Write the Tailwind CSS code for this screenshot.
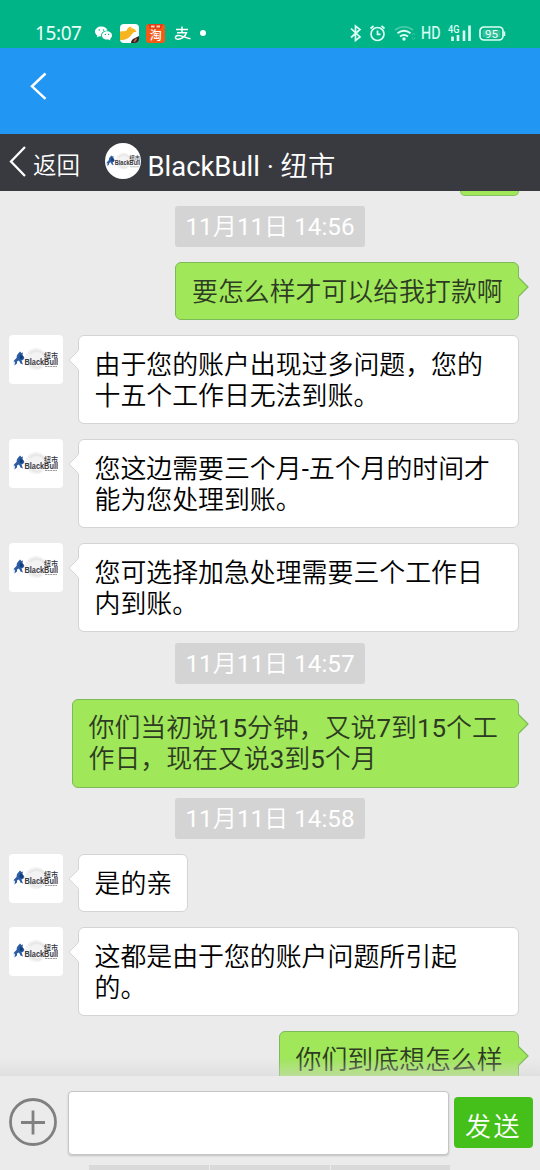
<!DOCTYPE html>
<html lang="zh-CN">
<head>
<meta charset="utf-8">
<title>BlackBull · 纽市</title>
<script src="https://cdn.jsdelivr.net/npm/@tailwindcss/browser@4"></script>
</head>
<body class="bg-[#ebebeb]">
<svg class="hidden">
  <symbol id="logo" viewBox="0 0 54 49">
    <circle cx="27" cy="24" r="11" fill="#f3f3f3"/>
    <path d="M20 19q6-5 12-2t5 9M20 28q5 6 12 4" fill="none" stroke="#e8e8e8" stroke-width="2"/>
    <path d="M4 29.500l1-4 2.500-2.500.500-3 3-3.500 1.500 1.500 1.500-.500-.500 2.500 2 3-1.500 2-1.500.500 1.500 4-2.500-1-1.500-3-2 1 0 2-2.500 2 .500-4-1.500.500z" fill="#2d5da3"/>
    <path d="M11 19l3.500 2.500-1.500 3-2.500-1z" fill="#173e7b"/>
    <text x="15.500" y="29.600" font-family="Liberation Sans, sans-serif" font-size="8.800" font-weight="700" fill="#38383e" textLength="33.500" lengthAdjust="spacingAndGlyphs">BlackBull</text>
    <text x="35" y="22.800" font-family="Noto Sans CJK SC, sans-serif" font-size="7" font-weight="500" fill="#34343a">纽市</text>
    <path d="M36 31.500h12" stroke="#999" stroke-width="1" stroke-dasharray="2 .6"/>
  </symbol>
  <symbol id="tailL" viewBox="0 0 11 20"><path d="M11 0L1 10l10 10z" fill="#fff"/><path d="M10.500.500L1 10l9.500 9.500" fill="none" stroke="#d6d6d6"/></symbol>
  <symbol id="tailR" viewBox="0 0 11 20"><path d="M0 0l10 10L0 20z" fill="#a0e75a"/><path d="M.500.500L10 10 .500 19.500" fill="none" stroke="#7cba58" stroke-width="1.2"/></symbol>
</svg>
<div class="w-[540px] h-[1170px] overflow-hidden flex flex-col bg-[#ebebeb] font-[Roboto,'Noto_Sans_CJK_SC',sans-serif]">
  <div class="h-12 shrink-0 bg-[#00b487] flex items-start justify-between pt-[21px] pl-[35px] pr-[34px] text-[#e9fff8]">
    <div class="flex items-center h-6">
      <span class="w-[60px] text-[19px] leading-6 tracking-[-0.4px] font-['Noto_Sans',sans-serif]">15:07</span>
      <svg class="w-[17px] h-[15px]" viewBox="0 0 17 15"><path d="M6.500.500C3 .500 0 2.600 0 5.600c0 1.700.900 3 2.300 3.900L1.800 11.500l2.300-1.200 2.200.300C5.500 7 8 4.500 12.500 4.400 11.700 2 9.300.500 6.500.500z" fill="#fff"/><path d="M12 5.200c-2.900 0-5 1.900-5 4.200s2.100 4.200 5 4.200l1.500-.200 2 1-.400-1.700c1.200-.800 1.900-2 1.900-3.300 0-2.300-2.200-4.200-5-4.200z" fill="#fff"/><g fill="#00b487"><circle cx="4.300" cy="4" r=".8"/><circle cx="8.600" cy="4" r=".8"/><circle cx="10.400" cy="8.400" r=".7"/><circle cx="13.600" cy="8.400" r=".7"/></g></svg>
      <svg class="ml-2 w-[19px] h-[19px]" viewBox="0 0 19 19"><rect width="19" height="19" rx="4" fill="#fff"/><path d="M0 7.500l6-.500 2-3 2-1.500 2 1.500 3 1.500 1.500 2.500-2.500 0-2 2q-3 5-9 6L0 16z" fill="#f6b51e"/><path d="M10 3l1 2 3 1z" fill="#ffd04b"/><path d="M11 19q0-3 3-4.500l5-2.500v3q0 4-4 4z" fill="#2b2523"/><path d="M14 18l2.500-3.500" stroke="#d55d3e" stroke-width="1.500"/></svg>
      <svg class="ml-[7px] w-[19px] h-[19px]" viewBox="0 0 19 19"><rect width="19" height="19" rx="3" fill="#f35b17"/><path d="M2 0h15l-2 5H4z" fill="#e83d1c"/><path d="M5 2.500h3.500M10.500 2.500h3.500" stroke="#ffd9a8" stroke-width="2"/><text x="3.800" y="15.500" font-size="12" font-weight="500" fill="#fff" font-family="Noto Sans CJK SC, sans-serif">淘</text></svg>
      <svg class="ml-[9px] w-[17px] h-[15px]" viewBox="0 0 17 15"><path d="M2 3.500h12M8 .500v6M3 6.700h9.500C11 11 7 13.500 3.500 13.200c-2.600-.200-3-3.200.300-3.700C8 9 11 12 16.500 12.800" fill="none" stroke="#fff" stroke-width="1.500"/></svg>
      <span class="ml-[9px] w-[6px] h-[6px] rounded-full bg-white"></span>
    </div>
    <svg class="w-[157px] h-6" viewBox="0 0 157 24" fill="none" stroke="#dcfff4" stroke-width="1.700">
      <path d="M2 7.500l9 8.500-4.500 3.500V5l4.500 3.500L2 16.500"/>
      <circle cx="28.500" cy="13" r="6.500"/><path d="M28.500 9.500V13.300h3M21.500 7.500l3-2.500M35.500 7.500l-3-2.500"/>
      <path d="M46 9q9-6.500 18 0" stroke="#4cccaa"/><path d="M48.500 12.200q6.500-5 13 0M51 15.500q4-3 8 0" stroke-width="2"/><circle cx="55" cy="18" r="1.700" fill="#dcfff4" stroke="none"/><path d="M63 14l1.500-2 1.500 2M63 16.500l1.500 2 1.500-2" stroke="#3cc3a0" stroke-width="1"/>
      <text x="72" y="18" font-size="17.500" fill="#dcfff4" stroke="#dcfff4" stroke-width=".2" font-family="Roboto, sans-serif" textLength="19.500" lengthAdjust="spacingAndGlyphs">HD</text>
      <text x="99" y="11.500" font-size="10" font-weight="500" fill="#dcfff4" stroke="none" font-family="Roboto, sans-serif" textLength="11.500" lengthAdjust="spacingAndGlyphs">4G</text>
      <path d="M103.500 15.500v4.500M109 14v6M115 9.500v10.500M120.500 4.500v15.500" stroke-width="2.600"/>
      <rect x="131" y="6" width="23" height="13" rx="4"/><path d="M155.500 10.500v4.500" stroke-width="1.500"/><rect x="133.500" y="8.500" width="18" height="8" rx="2" fill="#35bf9b" stroke="none"/>
      <text x="136" y="16.500" font-size="11.500" fill="#eafff9" stroke="none" font-family="Roboto, sans-serif">95</text>
    </svg>
  </div>
  <div class="h-[86px] shrink-0 bg-[#2196f3] pt-6 pl-[30px]">
    <svg class="w-[17px] h-[28px]" viewBox="0 0 17 28"><path d="M15.500 1.500L2 14.300l13.500 12.500" fill="none" stroke="#fff" stroke-width="2.500"/></svg>
  </div>
  <div class="h-[57px] shrink-0 bg-[#393a3f] flex items-start pl-[9px] text-white">
    <svg class="mt-[12px] w-[17px] h-[31px]" viewBox="0 0 17 31"><path d="M16 1L2 15.500 16 30" fill="none" stroke="#fff" stroke-width="2.300"/></svg>
    <span class="ml-[7px] w-[72px] mt-[15px] text-[23.500px] leading-[34px] font-[350]">返回</span>
    <span class="mt-[9px] w-9 h-9 rounded-full bg-white overflow-hidden flex items-center justify-center"><svg class="w-[41px] h-[37px] shrink-0"><use href="#logo"/></svg></span>
    <span class="ml-[6.500px] mt-[16px] text-[27.400px] leading-[34px] whitespace-nowrap">BlackBull · <span class="font-[350]">纽市</span></span>
  </div>
  <main class="h-[885px] shrink-0 relative overflow-hidden flex flex-col pl-[9px] pr-[21px] text-[25.900px] leading-[31px] text-black whitespace-nowrap font-[350]">
    <div class="self-end w-[59px] h-[5px] shrink-0 border border-t-0 border-[#86c264] bg-[#a0e75a] rounded-b-[5px]"></div>
    <div class="ml-[166px] mt-[10px] w-[190px] h-[41px] shrink-0 rounded-[3px] bg-[#d4d4d4] text-white text-[24.200px] leading-[43px] text-center font-normal">11<span class="font-[350]">月</span>11<span class="font-[350]">日</span> 14:56</div>
    <div class="relative self-end mt-[15px] h-[58px] w-[344px] shrink-0 border-[1.500px] border-[#7cba58] rounded-[6px] bg-[#a0e75a] text-[#2d3b22] pl-[16px] pt-[14px]"><p>要怎么样才可以给我打款啊</p><svg class="absolute -right-[11px] top-[14px] w-[11px] h-5"><use href="#tailR"/></svg></div>
    <div class="mt-[15px] flex items-start shrink-0">
      <svg class="w-[54px] h-[49px] rounded-[4px] bg-white"><use href="#logo"/></svg>
      <div class="relative ml-[15px] w-[441px] h-[89px] border-[1.500px] border-[#d4d4d4] rounded-[6px] bg-white pl-[15.500px] pt-[14px]"><p>由于您的账户出现过多问题，您的</p><p>十五个工作日无法到账。</p><svg class="absolute -left-[11px] top-[14px] w-[11px] h-5"><use href="#tailL"/></svg></div>
    </div>
    <div class="mt-[15px] flex items-start shrink-0">
      <svg class="w-[54px] h-[49px] rounded-[4px] bg-white"><use href="#logo"/></svg>
      <div class="relative ml-[15px] w-[441px] h-[89px] border-[1.500px] border-[#d4d4d4] rounded-[6px] bg-white pl-[15.500px] pt-[14px]"><p>您这边需要三个月<span class="font-normal">-</span>五个月的时间才</p><p>能为您处理到账。</p><svg class="absolute -left-[11px] top-[14px] w-[11px] h-5"><use href="#tailL"/></svg></div>
    </div>
    <div class="mt-[15px] flex items-start shrink-0">
      <svg class="w-[54px] h-[49px] rounded-[4px] bg-white"><use href="#logo"/></svg>
      <div class="relative ml-[15px] w-[441px] h-[89px] border-[1.500px] border-[#d4d4d4] rounded-[6px] bg-white pl-[15.500px] pt-[14px]"><p>您可选择加急处理需要三个工作日</p><p>内到账。</p><svg class="absolute -left-[11px] top-[14px] w-[11px] h-5"><use href="#tailL"/></svg></div>
    </div>
    <div class="ml-[166px] mt-[11px] w-[190px] h-[41px] shrink-0 rounded-[3px] bg-[#d4d4d4] text-white text-[24.200px] leading-[43px] text-center font-normal">11<span class="font-[350]">月</span>11<span class="font-[350]">日</span> 14:57</div>
    <div class="relative self-end mt-[15px] h-[89px] w-[447px] shrink-0 border-[1.500px] border-[#7cba58] rounded-[6px] bg-[#a0e75a] text-[#2d3b22] pl-[15.500px] pt-[13px]"><p>你们当初说<span class="font-normal">15</span>分钟，又说<span class="font-normal">7</span>到<span class="font-normal">15</span>个工</p><p>作日，现在又说<span class="font-normal">3</span>到<span class="font-normal">5</span>个月</p><svg class="absolute -right-[11px] top-[14px] w-[11px] h-5"><use href="#tailR"/></svg></div>
    <div class="ml-[166px] mt-[10px] w-[190px] h-[41px] shrink-0 rounded-[3px] bg-[#d4d4d4] text-white text-[24.200px] leading-[43px] text-center font-normal">11<span class="font-[350]">月</span>11<span class="font-[350]">日</span> 14:58</div>
    <div class="mt-[15px] flex items-start shrink-0">
      <svg class="w-[54px] h-[49px] rounded-[4px] bg-white"><use href="#logo"/></svg>
      <div class="relative ml-[15px] w-[110px] h-[58px] border-[1.500px] border-[#d4d4d4] rounded-[6px] bg-white pl-[15.500px] pt-[14px]"><p>是的亲</p><svg class="absolute -left-[11px] top-[14px] w-[11px] h-5"><use href="#tailL"/></svg></div>
    </div>
    <div class="mt-[15px] flex items-start shrink-0">
      <svg class="w-[54px] h-[49px] rounded-[4px] bg-white"><use href="#logo"/></svg>
      <div class="relative ml-[15px] w-[441px] h-[89px] border-[1.500px] border-[#d4d4d4] rounded-[6px] bg-white pl-[15.500px] pt-[14px]"><p>这都是由于您的账户问题所引起</p><p>的。</p><svg class="absolute -left-[11px] top-[14px] w-[11px] h-5"><use href="#tailL"/></svg></div>
    </div>
    <div class="relative self-end mt-[15px] h-[58px] w-[240px] shrink-0 border-[1.500px] border-[#7cba58] rounded-[6px] bg-[#a0e75a] text-[#2d3b22] pl-[15.500px] pt-[13px]"><p>你们到底想怎么样</p><svg class="absolute -right-[11px] top-[14px] w-[11px] h-5"><use href="#tailR"/></svg></div>
    <div class="absolute inset-x-0 bottom-0 h-[18px] bg-linear-to-b from-[#d5d5d5]/0 to-[#d5d5d5]/50"></div>
  </main>
  <footer class="h-[94px] shrink-0 bg-[#ebebeb] flex flex-col">
    <div class="flex items-start pt-[15px] pl-[9px] h-[89px]">
      <svg class="mt-[7px] w-12 h-12" viewBox="0 0 48 48" fill="none" stroke="#808080" stroke-width="2.800"><circle cx="24" cy="24" r="22.500"/><path d="M12 24.500h24M24 12.500v24"/></svg>
      <div class="ml-[11px] w-[381px] h-[64px] rounded-[4px] border border-[#c6c6c6] bg-white shadow-[0_1px_2px_#0000002e]"></div>
      <div class="ml-[5px] mt-[6px] w-[79px] h-[51px] rounded-[4px] bg-[#45c01a] text-white text-[26px] leading-[60px] text-center tracking-[2.500px] font-[350]">发送</div>
    </div>
    <div class="ml-[89px] flex gap-px h-[5px]"><span class="w-[120px] bg-[#d9d9d9]"></span><span class="w-[120px] bg-[#d9d9d9]"></span><span class="w-[119px] bg-[#d9d9d9]"></span></div>
  </footer>
</div>
</body>
</html>
